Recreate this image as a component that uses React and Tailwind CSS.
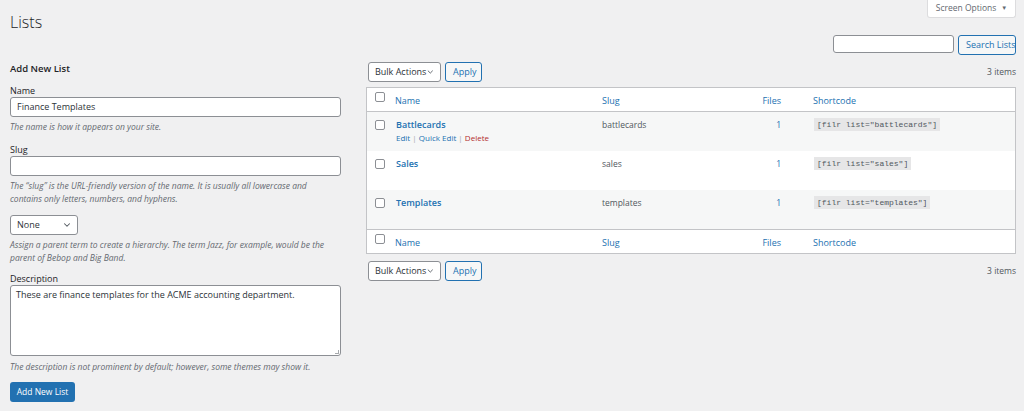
import React from 'react';
import { ChevronDown } from 'lucide-react';

const font = { fontFamily: '"Open Sans", "Noto Sans", sans-serif' };

const rows = [
    { name: 'Battlecards', slug: 'battlecards', files: 1, shortcode: '[filr list="battlecards"]', alt: true, actions: true },
    { name: 'Sales', slug: 'sales', files: 1, shortcode: '[filr list="sales"]', alt: false },
    { name: 'Templates', slug: 'templates', files: 1, shortcode: '[filr list="templates"]', alt: true },
];

const Checkbox = () => (
    <span className="block w-[10px] h-[10px] rounded-[2px] border border-[#8c8f94] bg-white" />
);

const Select = ({ label, width }) => (
    <div className={`flex items-center justify-between h-[20px] ${width} pl-[6px] pr-[5px] bg-white border border-[#8c8f94] rounded-[3px] text-[9px] whitespace-nowrap text-[#2c3338]`}>
        <span>{label}</span>
        <ChevronDown size={10} strokeWidth={2.5} className="text-[#50575e]" />
    </div>
);

const SecondaryButton = ({ children, className = '' }) => (
    <button className={`h-[20px] px-[7px] bg-[#f6f7f7] border border-[#2271b1] rounded-[3px] text-[9px] whitespace-nowrap text-[#2271b1] ${className}`}>
        {children}
    </button>
);

// bulk actions bar, used above and below the table
const TableNav = () => (
    <div className="flex items-center h-[20px] pl-[2px]">
        <Select label="Bulk Actions" width="w-[73px]" />
        <SecondaryButton className="ml-[4px] w-[37px] px-0">Apply</SecondaryButton>
        <span className="ml-auto text-[8.5px] text-[#50575e]">3 items</span>
    </div>
);

const Help = ({ children, className = '' }) => (
    <p className={`text-[8.5px] leading-[13px] italic text-[#646970] ${className}`}>{children}</p>
);

const Label = ({ children, className = '' }) => (
    <label className={`block text-[9px] leading-[13px] text-[#1d2327] ${className}`}>{children}</label>
);

const grid = 'grid grid-cols-[21px_207px_1fr_60px_226px]';

const HeaderRow = ({ border }) => (
    <div className={`${grid} h-[24px] bg-white text-[9px] leading-[13px] text-[#2271b1] ${border}`}>
        <div className="pl-[8px] pt-[4px]"><Checkbox /></div>
        <div className="pl-[7px] pt-[6px]">Name</div>
        <div className="pl-[7px] pt-[6px]">Slug</div>
        <div className="pr-[8px] pt-[6px] text-right">Files</div>
        <div className="pl-[24px] pt-[6px]">Shortcode</div>
    </div>
);

export default function App() {
    return (
        <div className="min-h-screen bg-[#f0f0f1] pl-[10px] pr-[8px]" style={font}>
            <div className="flex justify-between items-start h-[35px]">
                <h1 className="mt-[11px] text-[16px] leading-[22px] font-light text-[#1d2327]">Lists</h1>
                <button className="flex items-center gap-[5px] h-[18px] w-[89px] justify-center bg-white border-x border-b border-[#dcdcde] rounded-b-[3px] text-[8.5px] text-[#646970]">
                    Screen Options <span className="text-[6px]">▼</span>
                </button>
            </div>

            <div className="flex justify-end gap-[4px] h-[18px]">
                <div className="w-[121px] h-[18px] bg-white border border-[#8c8f94] rounded-[3px]" />
                <SecondaryButton className="h-[18px] w-[58px] px-0 text-[8.5px]">Search Lists</SecondaryButton>
            </div>

            <div className="flex gap-[25px] mt-[9px]">
                {/* Add new list form */}
                <div className="w-[331px] shrink-0">
                    <h2 className="text-[9.5px] leading-[14px] font-semibold text-[#1d2327]">Add New List</h2>

                    <Label className="mt-[8px]">Name</Label>
                    <div className="h-[20px] bg-white border border-[#8c8f94] rounded-[3px] px-[6px] flex items-center text-[9px] text-[#2c3338]">
                        Finance Templates
                    </div>
                    <Help className="mt-[3px]">The name is how it appears on your site.</Help>

                    <Label className="mt-[10px]">Slug</Label>
                    <div className="h-[20px] bg-white border border-[#8c8f94] rounded-[3px]" />
                    <Help className="mt-[3px] w-[318px]">
                        The “slug” is the URL-friendly version of the name. It is usually all lowercase and contains only letters, numbers, and hyphens.
                    </Help>

                    <div className="mt-[10px]">
                        <Select label="None" width="w-[68px]" />
                    </div>
                    <Help className="mt-[3px]">
                        Assign a parent term to create a hierarchy. The term Jazz, for example, would be the parent of Bebop and Big Band.
                    </Help>

                    <Label className="mt-[8px]">Description</Label>
                    <div className="relative h-[71px] bg-white border border-[#8c8f94] rounded-[3px] px-[5px] pt-[2px] text-[9px] leading-[13px] text-[#2c3338]">
                        These are finance templates for the ACME accounting department.
                        <span className="absolute right-[1px] bottom-[1px] w-[4px] h-[4px] border-r border-b border-[#a7aaad]" />
                    </div>
                    <Help className="mt-[4px]">The description is not prominent by default; however, some themes may show it.</Help>

                    <button className="mt-[9px] h-[20px] w-[65px] bg-[#2271b1] rounded-[3px] text-[8.5px] whitespace-nowrap text-white">
                        Add New List
                    </button>
                </div>

                {/* Lists table */}
                <div className="flex-1 min-w-0">
                    <TableNav />
                    <div className="mt-[5px] border border-[#c3c4c7]">
                        <HeaderRow border="border-b border-[#c3c4c7]" />
                        {rows.map((row) => (
                            <div key={row.name} className={`${grid} h-[39px] ${row.alt ? 'bg-[#f6f7f7]' : 'bg-white'}`}>
                                <div className="pl-[8px] pt-[8px]"><Checkbox /></div>
                                <div className="pl-[8px] pt-[6px]">
                                    <div className="text-[9px] leading-[13px] font-semibold text-[#2271b1]">{row.name}</div>
                                    {row.actions && (
                                        <div className="mt-[1px] text-[8px] leading-[12px] text-[#2271b1]">
                                            Edit <span className="text-[#a7aaad]">|</span> Quick Edit <span className="text-[#a7aaad]">|</span>{' '}
                                            <span className="text-[#b32d2e]">Delete</span>
                                        </div>
                                    )}
                                </div>
                                <div className="pl-[7px] pt-[6px] text-[8.5px] leading-[13px] text-[#50575e]">{row.slug}</div>
                                <div className="pr-[8px] pt-[6px] text-right text-[8.5px] leading-[13px] text-[#2271b1]">{row.files}</div>
                                <div className="pl-[25px] pt-[6px]">
                                    <code className="block w-fit px-[3px] bg-[#e6e6e7] text-[8px] leading-[13px] text-[#50575e]" style={{ fontFamily: '"Liberation Mono", monospace' }}>
                                        {row.shortcode}
                                    </code>
                                </div>
                            </div>
                        ))}
                        <HeaderRow border="border-t border-[#c3c4c7]" />
                    </div>
                    <div className="mt-[7px]">
                        <TableNav />
                    </div>
                </div>
            </div>
        </div>
    );
}
